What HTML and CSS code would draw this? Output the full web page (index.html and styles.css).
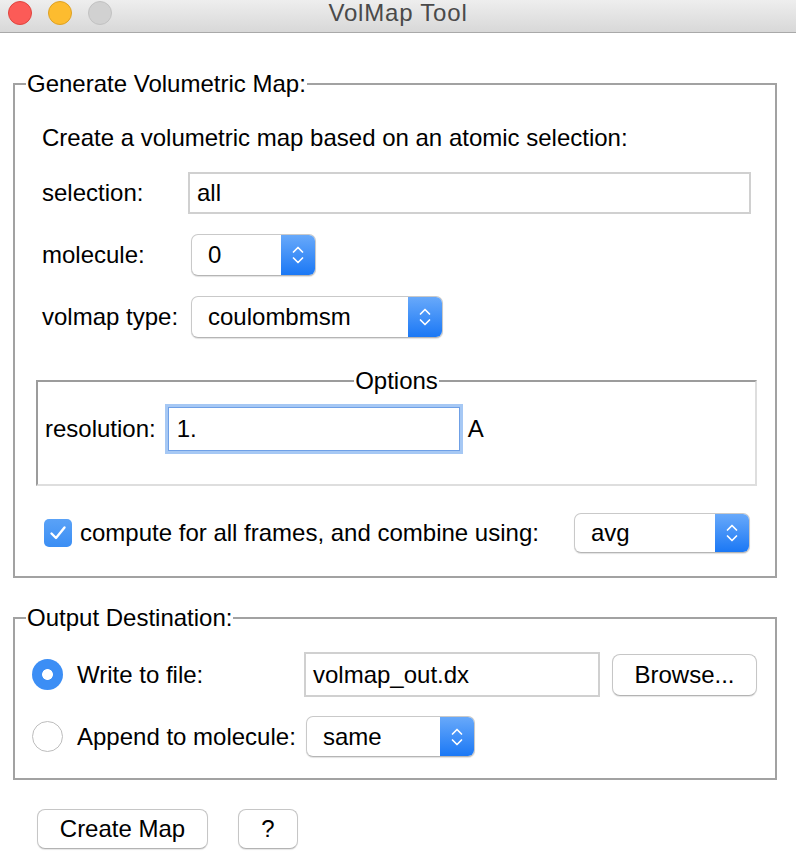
FILE: index.html
```html
<!DOCTYPE html>
<html>
<head>
<meta charset="utf-8">
<title>VolMap Tool</title>
<link rel="stylesheet" href="styles.css">
</head>
<body>
<div class="window">
  <header class="titlebar">
    <div class="lights">
      <span class="light red"></span>
      <span class="light yellow"></span>
      <span class="light gray"></span>
    </div>
    <div class="title">VolMap Tool</div>
    <div></div>
  </header>

  <main class="content">
    <fieldset class="group group-gen">
      <legend>Generate Volumetric Map:</legend>
      <p class="intro">Create a volumetric map based on an atomic selection:</p>

      <div class="form-row">
        <span class="label">selection:</span>
        <div class="field field-selection">all</div>
      </div>

      <div class="form-row row-select">
        <span class="label">molecule:</span>
        <div class="select select-molecule">
          <span class="select-text">0</span>
          <span class="select-btn"><svg viewBox="0 0 12 22" width="12" height="22"><path d="M1.5 8 L6 3.5 L10.5 8 M1.5 14 L6 18.5 L10.5 14" fill="none" stroke="#fff" stroke-width="1.7" stroke-linecap="round" stroke-linejoin="round"/></svg></span>
        </div>
      </div>

      <div class="form-row row-select">
        <span class="label">volmap type:</span>
        <div class="select select-type">
          <span class="select-text">coulombmsm</span>
          <span class="select-btn"><svg viewBox="0 0 12 22" width="12" height="22"><path d="M1.5 8 L6 3.5 L10.5 8 M1.5 14 L6 18.5 L10.5 14" fill="none" stroke="#fff" stroke-width="1.7" stroke-linecap="round" stroke-linejoin="round"/></svg></span>
        </div>
      </div>

      <fieldset class="options">
        <legend>Options</legend>
        <div class="res-row">
          <span class="label">resolution:</span>
          <div class="field field-focus">1.</div>
          <span class="unit">A</span>
        </div>
      </fieldset>

      <div class="combine-row">
        <div class="check-wrap">
          <span class="checkbox"><svg viewBox="0 0 28 28" width="28" height="28"><path d="M7.5 14.5 L12 19 L20.5 8.5" fill="none" stroke="#fff" stroke-width="2.4" stroke-linecap="round" stroke-linejoin="round"/></svg></span>
          <span class="check-label">compute for all frames, and combine using:</span>
        </div>
        <div class="select select-avg">
          <span class="select-text">avg</span>
          <span class="select-btn"><svg viewBox="0 0 12 22" width="12" height="22"><path d="M1.5 8 L6 3.5 L10.5 8 M1.5 14 L6 18.5 L10.5 14" fill="none" stroke="#fff" stroke-width="1.7" stroke-linecap="round" stroke-linejoin="round"/></svg></span>
        </div>
      </div>
    </fieldset>

    <fieldset class="group group-out">
      <legend>Output Destination:</legend>
      <div class="out-grid">
        <div class="radio-wrap">
          <span class="radio radio-on"></span>
          <span class="radio-label">Write to file:</span>
        </div>
        <div class="file-row">
          <div class="field field-file">volmap_out.dx</div>
          <button class="btn btn-browse" type="button">Browse...</button>
        </div>
        <div class="radio-wrap">
          <span class="radio"></span>
          <span class="radio-label">Append to molecule:</span>
        </div>
        <div class="append-row">
          <div class="select select-same">
            <span class="select-text">same</span>
            <span class="select-btn"><svg viewBox="0 0 12 22" width="12" height="22"><path d="M1.5 8 L6 3.5 L10.5 8 M1.5 14 L6 18.5 L10.5 14" fill="none" stroke="#fff" stroke-width="1.7" stroke-linecap="round" stroke-linejoin="round"/></svg></span>
          </div>
        </div>
      </div>
    </fieldset>

    <div class="actions">
      <button class="btn btn-create" type="button">Create Map</button>
      <button class="btn btn-help" type="button">?</button>
    </div>
  </main>
</div>
</body>
</html>
```

FILE: styles.css
```css
* { box-sizing: border-box; }

html, body {
  margin: 0;
  padding: 0;
  background: #ffffff;
}

body {
  font-family: "Liberation Sans", Arial, Helvetica, sans-serif;
  font-size: 24px;
  line-height: 24px;
  color: #000;
}

.window {
  width: 796px;
  height: 860px;
  overflow: hidden;
  background: #fff;
}

/* Title bar */
.titlebar {
  height: 33px;
  display: grid;
  grid-template-columns: 1fr auto 1fr;
  align-items: center;
  padding-bottom: 7px;
  background: linear-gradient(#eeeeee, #d8d8d8);
  border-bottom: 1px solid #a9a9a9;
}

.lights {
  display: flex;
  gap: 16px;
  padding-left: 8px;
}

.light {
  width: 24px;
  height: 24px;
  border-radius: 50%;
  display: block;
}

.light.red { background: #fc5b57; border: 1px solid #e0443e; }
.light.yellow { background: #fdbc2f; border: 1px solid #dea123; }
.light.gray { background: #d1d1d1; border: 1px solid #c2c2c2; }

.title {
  font-size: 24px;
  letter-spacing: 0.8px;
  color: #4a4a4a;
  line-height: 24px;
}

/* Content */
.content {
  display: flex;
  flex-direction: column;
}

.group {
  margin: 0;
  min-width: 0;
  border: 2px solid #a2a2a2;
}

.group > legend {
  padding: 0 1px;
  margin-left: -10px;
  line-height: 24px;
}

.group-gen {
  margin: 39px 19px 0 13px;
  padding: 0 18px 23px 21px;
}

.intro {
  margin: 30px 0 0 6px;
}

.form-row {
  display: grid;
  grid-template-columns: 146px auto;
  align-items: center;
  margin-left: 6px;
  margin-top: 22px;
}

.row-select { margin-top: 20px; }

.label { white-space: nowrap; }

.field {
  height: 42px;
  border: 2px solid #d0d0d0;
  background: #fff;
  padding: 0 7px;
  display: flex;
  align-items: center;
}

.field-selection {
  width: 563px;
}

.select {
  height: 42px;
  display: flex;
  margin-left: 3px;
  border-radius: 7px;
  border: 1px solid #c9c9c9;
  border-bottom-color: #b5b5b5;
  box-shadow: 0 1px 1px rgba(0, 0, 0, 0.12);
  background: #fff;
  overflow: hidden;
}

.select-text {
  flex: 1;
  padding-left: 16px;
  display: flex;
  align-items: center;
}

.select-btn {
  width: 34px;
  display: flex;
  align-items: center;
  justify-content: center;
  background: linear-gradient(#68a9fa, #1b78f5);
}

.select-molecule { width: 125px; }
.select-type { width: 252px; }
.select-avg { width: 176px; margin-left: 0; height: 40px; }
.select-same { width: 169px; margin-left: 2px; height: 41px; }

/* Options frame */
.options {
  margin: 31px 0 0 0;
  padding: 10px 7px 29px 7px;
  min-width: 0;
  border: 2px solid #9c9c9c;
  border-right-color: #dedede;
  border-bottom-color: #dedede;
}

.options > legend {
  margin: 0 auto;
  padding: 0 1px;
  line-height: 24px;
}

.res-row {
  display: flex;
  align-items: center;
  gap: 0;
}

.res-row .label {
  margin-right: 8px;
}

.field-focus {
  width: 292px;
  height: 44px;
  margin: 4px 8px 4px 4px;
  border: 1px solid #6fa0e6;
  box-shadow: 0 0 0 3px #a6c8f4;
  padding: 0 8px;
}

.unit { line-height: 24px; }

/* checkbox row */
.combine-row {
  margin-top: 27px;
  display: flex;
  align-items: center;
  justify-content: space-between;
  padding: 0 7px 0 8px;
}

.check-wrap {
  display: flex;
  align-items: center;
  gap: 8px;
}

.checkbox {
  width: 28px;
  height: 28px;
  border-radius: 5px;
  background: linear-gradient(#5aa2f7, #3b8ef4);
  display: flex;
}

/* Output frame */
.group-out {
  margin: 28px 19px 0 13px;
  padding: 22px 18px 21px 17px;
}

.group-out > legend {
  margin-left: -6px;
}

.out-grid {
  display: grid;
  grid-template-columns: 272px auto;
  row-gap: 19px;
  align-items: center;
}

.radio-wrap {
  display: flex;
  align-items: center;
  gap: 14px;
}

.radio {
  width: 31px;
  height: 31px;
  border-radius: 50%;
  border: 1.5px solid #bdbdbd;
  background: #fff;
  display: block;
  flex: none;
}

.radio-on {
  border: none;
  background: radial-gradient(circle, #ffffff 0 5px, #3c8ef5 5.8px);
}

.file-row {
  display: flex;
  align-items: center;
  gap: 12px;
}

.field-file {
  width: 296px;
  height: 45px;
}

.btn {
  font-family: inherit;
  font-size: 24px;
  line-height: 24px;
  color: #000;
  background: #fff;
  border: 1px solid #c6c6c6;
  border-bottom-color: #b3b3b3;
  border-radius: 8px;
  box-shadow: 0 1px 1px rgba(0, 0, 0, 0.1);
  padding: 0;
  margin: 0;
}

.btn-browse {
  width: 145px;
  height: 42px;
}

.actions {
  display: flex;
  gap: 30px;
  margin: 29px 0 0 37px;
}

.btn-create {
  width: 171px;
  height: 40px;
}

.btn-help {
  width: 60px;
  height: 40px;
}
```
